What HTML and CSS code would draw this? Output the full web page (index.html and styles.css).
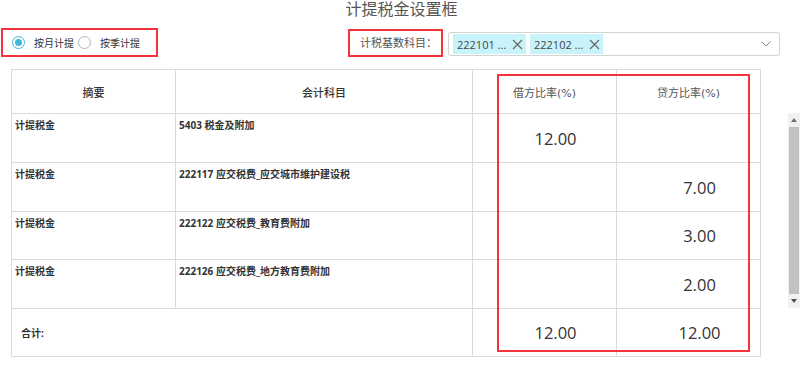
FILE: index.html
```html
<!DOCTYPE html>
<html lang="zh-CN">
<head>
  <meta charset="UTF-8" />
  <meta name="viewport" content="width=device-width, initial-scale=1.0"/>
  <title>计提税金设置框</title>
  <link rel="stylesheet" href="styles.css">
</head>
<body>

<div class="title">计提税金设置框</div>

<div class="toolbar">
  <div class="mark radio-group">
    <span class="radio checked"></span>
    <span class="radio-label">按月计提</span>
    <span class="radio"></span>
    <span class="radio-label">按季计提</span>
  </div>

  <div class="mark base-label">计税基数科目：</div>

  <div class="select">
    <span class="tag">222101 ...
      <svg class="tag-x" width="11" height="11" viewBox="0 0 11 11"><path d="M1 1L10 10M10 1L1 10" stroke="#666" stroke-width="1.2" fill="none"/></svg>
    </span>
    <span class="tag">222102 ...
      <svg class="tag-x" width="11" height="11" viewBox="0 0 11 11"><path d="M1 1L10 10M10 1L1 10" stroke="#666" stroke-width="1.2" fill="none"/></svg>
    </span>
    <svg class="arrow" width="10" height="6" viewBox="0 0 10 6"><path d="M0.5 0.5L5 5L9.5 0.5" stroke="#888" stroke-width="1" fill="none"/></svg>
  </div>
</div>

<div class="grid-area">
  <div class="table-wrap">
    <table class="tax-table">
      <colgroup>
        <col class="c1"><col class="c2"><col class="c3"><col class="c4">
      </colgroup>
      <thead>
        <tr>
          <th>摘要</th>
          <th>会计科目</th>
          <th class="rate">借方比率<span class="pct">(%)</span></th>
          <th class="rate">贷方比率<span class="pct">(%)</span></th>
        </tr>
      </thead>
      <tbody>
        <tr>
          <td class="txt">计提税金</td>
          <td class="txt">5403 税金及附加</td>
          <td class="num">12.00</td>
          <td class="num"></td>
        </tr>
        <tr>
          <td class="txt">计提税金</td>
          <td class="txt">222117 应交税费_应交城市维护建设税</td>
          <td class="num"></td>
          <td class="num">7.00</td>
        </tr>
        <tr class="short">
          <td class="txt">计提税金</td>
          <td class="txt">222122 应交税费_教育费附加</td>
          <td class="num"></td>
          <td class="num">3.00</td>
        </tr>
        <tr>
          <td class="txt">计提税金</td>
          <td class="txt">222126 应交税费_地方教育费附加</td>
          <td class="num"></td>
          <td class="num">2.00</td>
        </tr>
        <tr class="total">
          <td colspan="2" class="sum-label">合计:</td>
          <td class="num">12.00</td>
          <td class="num">12.00</td>
        </tr>
      </tbody>
    </table>
    <div class="mark-rates"></div>
  </div>

  <div class="scrollbar">
    <span class="sb-up"></span>
    <span class="sb-thumb"></span>
    <span class="sb-down"></span>
  </div>
</div>

</body>
</html>
```

FILE: styles.css
```css
body {
  margin: 0;
  font-family: "Open Sans", "Noto Sans CJK SC", sans-serif;
  color: #333;
  background: #fff;
  width: 800px;
  height: 377px;
  overflow: hidden;
}

.title {
  font-size: 16px;
  line-height: 18px;
  color: #555;
  text-align: center;
  padding-left: 3px;
  height: 28px;
}

.toolbar {
  display: flex;
  align-items: flex-start;
  height: 30px;
}

.mark {
  border: 2px solid #f5333a;
  box-sizing: border-box;
}

.radio-group {
  margin-left: 1px;
  width: 157px;
  height: 29px;
  display: flex;
  align-items: center;
  padding-left: 9px;
}

.radio {
  width: 13px;
  height: 13px;
  box-sizing: border-box;
  border: 1px solid #b5b5b5;
  border-radius: 50%;
  display: flex;
  align-items: center;
  justify-content: center;
  background: #fff;
}

.radio.checked {
  border-color: #3fb8dc;
}

.radio.checked::after {
  content: "";
  width: 7px;
  height: 7px;
  border-radius: 50%;
  background: #3fb8dc;
}

.radio-label {
  font-size: 10px;
  color: #333;
  margin-left: 9px;
  margin-right: 4px;
  width: 40px;
  white-space: nowrap;
}

.base-label {
  margin-left: 190px;
  margin-top: 1px;
  width: 95px;
  height: 28px;
  padding-left: 10px;
  font-size: 11px;
  line-height: 24px;
  color: #555;
  white-space: nowrap;
}

.select {
  margin-left: 5px;
  margin-top: 4px;
  width: 332px;
  height: 24px;
  box-sizing: border-box;
  border: 1px solid #d3d3d3;
  border-radius: 3px;
  display: flex;
  align-items: center;
  padding-left: 4px;
  gap: 4px;
}

.tag {
  display: flex;
  align-items: center;
  width: 73px;
  height: 20px;
  box-sizing: border-box;
  padding-left: 4px;
  background: #c9f3fb;
  font-size: 11px;
  color: #444;
  white-space: nowrap;
}

.tag-x {
  margin-left: auto;
  margin-right: 3px;
}

.arrow {
  margin-left: auto;
  margin-right: 8px;
}

.grid-area {
  display: flex;
  align-items: flex-start;
  margin-top: 11px;
}

.table-wrap {
  position: relative;
  margin-left: 11px;
}

.tax-table {
  border-collapse: collapse;
  table-layout: fixed;
  width: 749px;
}

.c1 { width: 164px; }
.c2 { width: 297px; }
.c3 { width: 144px; }
.c4 { width: 144px; }

.tax-table th,
.tax-table td {
  border: 1px solid #dadada;
  padding: 0;
}

.tax-table thead tr {
  height: 44px;
}

.tax-table tbody tr {
  height: 49px;
}

.tax-table tbody tr.short,
.tax-table tbody tr.total {
  height: 48px;
}

.tax-table th {
  font-size: 11px;
  font-weight: 500;
  color: #333;
  text-align: center;
  vertical-align: middle;
}

.tax-table th.rate {
  font-weight: normal;
  color: #555;
}

.tax-table th .pct {
  font-family: "DejaVu Sans", sans-serif;
  font-size: 11px;
}

.tax-table td.txt {
  vertical-align: top;
  font-size: 10px;
  line-height: 14px;
  font-weight: bold;
  padding: 4px 0 0 3px;
  white-space: nowrap;
}

.tax-table td.num {
  text-align: center;
  padding-left: 22px;
  font-size: 16.5px;
  vertical-align: middle;
  color: #333;
}

.tax-table td.sum-label {
  font-size: 10px;
  font-weight: bold;
  padding-left: 9px;
  vertical-align: middle;
}

.mark-rates {
  position: absolute;
  left: 486px;
  top: 5px;
  width: 253px;
  height: 278px;
  border: 2px solid #f5333a;
  box-sizing: border-box;
  pointer-events: none;
}

.scrollbar {
  margin-left: 27px;
  margin-top: 44px;
  width: 14px;
  height: 195px;
  background: #f1f1f1;
  display: flex;
  flex-direction: column;
  align-items: center;
}

.sb-up,
.sb-down {
  width: 0;
  height: 0;
  border-left: 3px solid transparent;
  border-right: 3px solid transparent;
  margin: 5px 0;
}

.sb-up {
  border-bottom: 4px solid #707070;
}

.sb-down {
  border-top: 4px solid #505050;
}

.sb-thumb {
  width: 10px;
  flex: 1;
  background: #c1c1c1;
}
```
